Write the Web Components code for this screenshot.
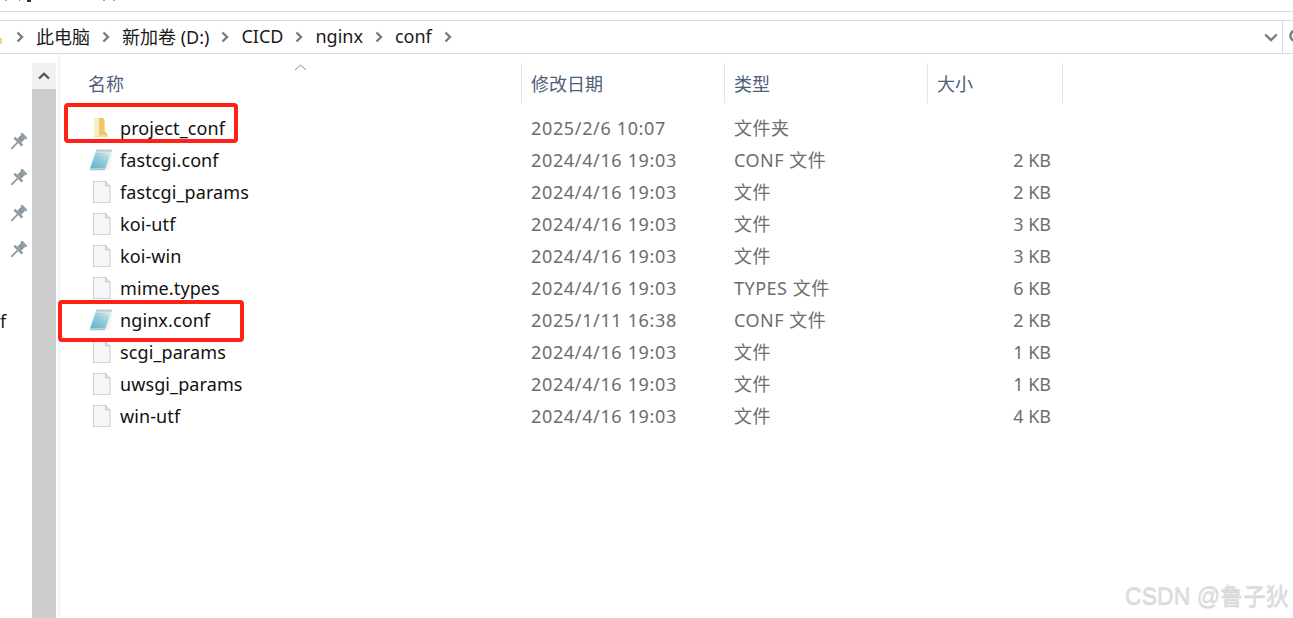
<!DOCTYPE html>
<html>
<head>
<meta charset="utf-8">
<title>conf</title>
<style>
  html, body { margin: 0; height: 100%; background: #fff; overflow: hidden; }
  body { font-family: "Noto Sans", "Noto Sans CJK SC", sans-serif; }
</style>
</head>
<body>
<explorer-window>
  <address-bar path="此电脑|新加卷 (D:)|CICD|nginx|conf"></address-bar>
  <nav-pane></nav-pane>
  <v-scroll></v-scroll>
  <file-list>
    <file-row icon="folder" name="project_conf" date="2025/2/6 10:07" kind="文件夹" size=""></file-row>
    <file-row icon="note" name="fastcgi.conf" date="2024/4/16 19:03" kind="CONF 文件" size="2 KB"></file-row>
    <file-row icon="file" name="fastcgi_params" date="2024/4/16 19:03" kind="文件" size="2 KB"></file-row>
    <file-row icon="file" name="koi-utf" date="2024/4/16 19:03" kind="文件" size="3 KB"></file-row>
    <file-row icon="file" name="koi-win" date="2024/4/16 19:03" kind="文件" size="3 KB"></file-row>
    <file-row icon="file" name="mime.types" date="2024/4/16 19:03" kind="TYPES 文件" size="6 KB"></file-row>
    <file-row icon="note" name="nginx.conf" date="2025/1/11 16:38" kind="CONF 文件" size="2 KB"></file-row>
    <file-row icon="file" name="scgi_params" date="2024/4/16 19:03" kind="文件" size="1 KB"></file-row>
    <file-row icon="file" name="uwsgi_params" date="2024/4/16 19:03" kind="文件" size="1 KB"></file-row>
    <file-row icon="file" name="win-utf" date="2024/4/16 19:03" kind="文件" size="4 KB"></file-row>
  </file-list>
</explorer-window>
<script>
  const FONT = '"Noto Sans", "Noto Sans CJK SC", sans-serif';

  // Windows Explorer shell: thin strip up top, then address bar, then the panes
  class ExplorerWindow extends HTMLElement {
    constructor() {
      super();
      this.attachShadow({ mode: "open" });
      this.shadowRoot.innerHTML = `
        <style>
          :host { display: block; position: relative; width: 1293px; height: 618px; overflow: hidden; background: #fff; font-family: ${FONT}; }
          .ribbon { height: 11px; border-bottom: 1px solid #dcdcdc; position: relative; }
          .ribbon i { position: absolute; top: 0; height: 1px; background: #777; }
          .gap { height: 8px; }
          .panes { display: flex; height: 564px; }
          .mark { position: absolute; border: 4px solid #ff2116; border-radius: 4px; box-sizing: border-box; }
          .one { left: 64px; top: 103px; width: 174px; height: 40px; }
          .two { left: 58px; top: 300px; width: 186px; height: 42px; }
          .wm { position: absolute; right: 4px; top: 577px; font: 23px "Liberation Sans", "Noto Sans CJK SC", sans-serif; color: #dedede; text-shadow: 0 1px 1px #cfcfcf; white-space: nowrap; }
        </style>
        <div class="ribbon">
          <i style="left:5px;width:2px;background:#c9a24a"></i><i style="left:19px;width:1px"></i>
          <i style="left:27px;width:4px;height:2px;background:#333"></i>
          <i style="left:103px;width:2px;background:#7fa8c8"></i><i style="left:113px;width:2px;background:#c9a24a"></i>
        </div>
        <div class="gap"></div>
        <slot name="bar"></slot>
        <div class="panes"><slot></slot></div>
        <div class="mark one"></div>
        <div class="mark two"></div>
        <div class="wm">CSDN @鲁子狄</div>
      `;
      this.querySelector("address-bar").slot = "bar";
    }
  }

  class AddressBar extends HTMLElement {
    constructor() {
      super();
      this.attachShadow({ mode: "open" });
      const chev = `<svg width="8" height="12" viewBox="0 0 8 12"><path d="M1.500 1.500 6 6l-4.500 4.500" fill="none" stroke="#7b7b7b" stroke-width="2.400"/></svg>`;
      const parts = this.getAttribute("path").split("|");
      this.shadowRoot.innerHTML = `
        <style>
          :host { display: flex; align-items: center; height: 34px; box-sizing: border-box; border-top: 1px solid #dcdcdc; border-bottom: 1px solid #dcdcdc; position: relative; font-size: 18px; color: #1a1a1a; }
          .crumbs { display: flex; align-items: center; gap: 12px; padding-left: 16px; padding-bottom: 2px; flex: 1; white-space: nowrap; }
          .crumbs svg { flex: none; position: relative; top: 1px; }
          .tip { position: absolute; left: 0; top: 17px; width: 2px; height: 6px; background: #f8d775; }
          .drop { width: 16px; display: flex; justify-content: center; margin-right: 3px; }
          .sep { width: 1px; align-self: stretch; background: #dcdcdc; }
          .refresh { width: 10px; overflow: hidden; padding-left: 6px; box-sizing: border-box; }
        </style>
        <span class="tip"></span>
        <div class="crumbs">${chev}${parts.map((p) => `<span>${p}</span>${chev}`).join("")}</div>
        <div class="drop"><svg width="14" height="9" viewBox="0 0 14 9"><path d="M1.200 1.500 7 7l5.800-5.500" fill="none" stroke="#7b7b7b" stroke-width="2.400"/></svg></div>
        <div class="sep"></div>
        <div class="refresh"><svg width="14" height="16" viewBox="0 0 14 16"><path d="M11 4a5.500 5.500 0 1 0 1.500 4" fill="none" stroke="#7b7b7b" stroke-width="2.400"/></svg></div>
      `;
    }
  }

  // Only the right edge of the navigation tree is visible
  class NavPane extends HTMLElement {
    constructor() {
      super();
      this.attachShadow({ mode: "open" });
      const pin = `<div class="row pin"><svg width="18" height="18" viewBox="0 0 16 16"><g transform="rotate(45 8 8)" fill="#8d99a1"><rect x="4.500" y="-.5" width="7" height="2"/><rect x="5.500" y="1.500" width="5" height="5"/><rect x="3" y="6.500" width="10" height="2.200"/><rect x="7.200" y="8.700" width="1.600" height="7.800"/></g></svg></div>`;
      this.shadowRoot.innerHTML = `
        <style>
          :host { display: block; width: 32px; flex: none; padding-top: 69px; box-sizing: border-box; font-size: 18px; color: #1a1a1a; overflow: hidden; }
          .row { height: 36px; display: flex; align-items: center; }
          .pin { justify-content: flex-end; padding-right: 5px; padding-top: 2px; box-sizing: border-box; }
        </style>
        ${pin.repeat(4)}
        <div class="row"></div>
        <div class="row">f</div>
      `;
    }
  }

  class VScroll extends HTMLElement {
    constructor() {
      super();
      this.attachShadow({ mode: "open" });
      this.shadowRoot.innerHTML = `
        <style>
          :host { display: flex; flex-direction: column; width: 24px; flex: none; margin-top: 9px; }
          .up { height: 26px; background: #f0f0f0; display: flex; align-items: center; justify-content: center; }
          .track { flex: 1; background: #cdcdcd; }
        </style>
        <div class="up"><svg width="12" height="8" viewBox="0 0 12 8"><path d="M1 6.500 6 1.800l5 4.700" fill="none" stroke="#505050" stroke-width="2.200"/></svg></div>
        <div class="track"></div>
      `;
    }
  }

  class FileList extends HTMLElement {
    constructor() {
      super();
      this.attachShadow({ mode: "open" });
      this.shadowRoot.innerHTML = `
        <style>
          :host { display: block; flex: 1; margin-left: 2px; border-left: 2px solid #f4f4f4; padding-top: 9px; position: relative; }
          .head { display: grid; grid-template-columns: 462px 203px 203px 135px; height: 40px; color: #4c607a; font-size: 18px; }
          .head div { display: flex; align-items: center; box-sizing: border-box; padding-left: 9px; border-right: 1px solid #e5e5e5; }
          .head div:first-child { padding-left: 28px; }
          .sort { position: absolute; left: 234px; top: 10px; }
          .rows { padding-top: 9px; }
        </style>
        <div class="head">
          <div>名称</div><div>修改日期</div><div>类型</div><div>大小</div>
        </div>
        <svg class="sort" width="13" height="7" viewBox="0 0 13 7"><path d="M1 6 6.500 1 12 6" fill="none" stroke="#8a8a8a"/></svg>
        <div class="rows"><slot></slot></div>
      `;
    }
  }

  const ICONS = {
    folder: `<svg width="24" height="24" viewBox="0 0 24 24"><path d="M5 2h9l1.500 2v17H5z" fill="#f9e8b4"/><path d="M10 2h4l1.500 2v11l3.500 4v2H10z" fill="#eec866"/><path d="M5 2h5v17l-5 2z" fill="#fbeec6"/><path d="M10 19h9v2H5z" fill="#f6dc92"/></svg>`,
    note: `<svg width="24" height="24" viewBox="0 0 24 24"><defs><linearGradient id="b" x1="0" y1="1" x2="1" y2="0"><stop offset="0" stop-color="#5fb0c8"/><stop offset=".6" stop-color="#98cfdf"/><stop offset="1" stop-color="#d6eef4"/></linearGradient></defs><path d="M7.500 1.500h16l-.6 3H6.500z" fill="#d2d2d2"/><path d="M8 2.500h15" stroke="#a8a8a8" stroke-dasharray="1 2"/><path d="M6.500 4.500h16.400L24 5l-4.500 17.500h-4L17 20z" fill="#f2f2f2"/><path d="M6.500 4.500h15.500L16.500 20.500H1z" fill="url(#b)"/><path d="M1 20.500h15.500l-1 1.800H1.500z" fill="#a9c3cc"/></svg>`,
    file: `<svg width="24" height="24" viewBox="0 0 24 24"><path d="M4.500 1.500h12l4.500 4.500v16a.5.500 0 0 1-.5.500H5a.5.500 0 0 1-.5-.5z" fill="#f5f6f8" stroke="#d4d4d4" stroke-width="1.200"/><path d="M16.500 1.500V6H21" fill="#e3e3e3" stroke="#c8c8c8"/></svg>`,
  };

  class FileRow extends HTMLElement {
    constructor() {
      super();
      this.attachShadow({ mode: "open" });
      const attr = (n) => this.getAttribute(n);
      this.shadowRoot.innerHTML = `
        <style>
          :host { display: grid; grid-template-columns: 462px 203px 203px 135px; height: 32px; align-items: center; font-size: 18px; white-space: nowrap; }
          .name { display: flex; align-items: center; color: #111; padding-left: 29px; letter-spacing: .1px; }
          .icon { width: 24px; height: 24px; margin-right: 7px; flex: none; }
          .dim { color: #6d6d6d; padding-left: 9px; }
          .date { letter-spacing: .65px; }
          .kind { letter-spacing: .5px; position: relative; top: -1px; }
          .size { text-align: right; padding: 0 12px 0 0; }
        </style>
        <div class="name"><span class="icon">${ICONS[attr("icon")]}</span><span>${attr("name")}</span></div>
        <div class="dim date">${attr("date")}</div>
        <div class="dim kind">${attr("kind")}</div>
        <div class="dim size">${attr("size")}</div>
      `;
    }
  }

  customElements.define("explorer-window", ExplorerWindow);
  customElements.define("address-bar", AddressBar);
  customElements.define("nav-pane", NavPane);
  customElements.define("v-scroll", VScroll);
  customElements.define("file-list", FileList);
  customElements.define("file-row", FileRow);
</script>
</body>
</html>
